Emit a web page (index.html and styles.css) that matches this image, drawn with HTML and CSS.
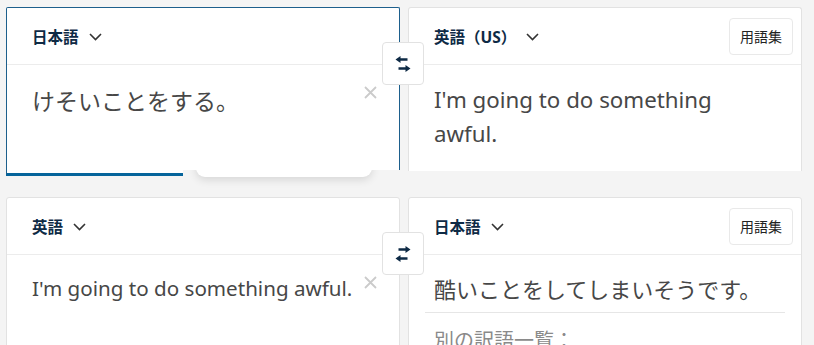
FILE: index.html
```html
<!DOCTYPE html>
<html>
<head>
  <meta charset="utf-8">
  <title>翻訳</title>
  <link rel="stylesheet" href="styles.css">
</head>
<body>
<div class="page">

  <!-- 1組目: 日本語 → 英語 -->
  <section class="pair pair-top">
    <div class="col col-focus">
      <div class="panel panel-focus">
        <div class="panel-head">
          <button class="lang">日本語<svg class="chev" width="13" height="8" viewBox="0 0 13 8"><path d="M1 1l5.5 5.5L12 1" fill="none" stroke="#333" stroke-width="1.6"/></svg></button>
        </div>
        <div class="panel-body">
          <div class="src-text src-jp">けそいことをする。</div>
          <button class="clear"><svg width="13" height="13" viewBox="0 0 13 13"><path d="M1 1l11 11M12 1L1 12" stroke="#cbcbcb" stroke-width="1.8"/></svg></button>
        </div>
      </div>
      <div class="focus-bar"></div>
      <div class="suggest"></div>
    </div>
    <div class="col">
      <div class="panel panel-cut">
        <div class="panel-head">
          <button class="lang">英語（US）<svg class="chev" width="13" height="8" viewBox="0 0 13 8"><path d="M1 1l5.5 5.5L12 1" fill="none" stroke="#333" stroke-width="1.6"/></svg></button>
          <button class="glossary">用語集</button>
        </div>
        <div class="panel-body out-body">
          <div class="out-text out-big">I'm going to do something awful.</div>
        </div>
      </div>
    </div>
    <button class="swap"><svg width="16" height="18" viewBox="0 0 16 18"><path d="M4 4.5H12.5M12 13.5H3.5" stroke="#0e2a45" stroke-width="2.4"/><path d="M0.5 4.5L5.5 1v7zM15.5 13.5L10.5 10v7z" fill="#0e2a45"/></svg></button>
  </section>

  <!-- 2組目: 英語 → 日本語 -->
  <section class="pair pair-bottom">
    <div class="col">
      <div class="panel panel-tall">
        <div class="panel-head">
          <button class="lang">英語<svg class="chev" width="13" height="8" viewBox="0 0 13 8"><path d="M1 1l5.5 5.5L12 1" fill="none" stroke="#333" stroke-width="1.6"/></svg></button>
        </div>
        <div class="panel-body">
          <div class="src-text src-en">I'm going to do something awful.</div>
          <button class="clear"><svg width="13" height="13" viewBox="0 0 13 13"><path d="M1 1l11 11M12 1L1 12" stroke="#cbcbcb" stroke-width="1.8"/></svg></button>
        </div>
      </div>
    </div>
    <div class="col">
      <div class="panel panel-tall">
        <div class="panel-head">
          <button class="lang">日本語<svg class="chev" width="13" height="8" viewBox="0 0 13 8"><path d="M1 1l5.5 5.5L12 1" fill="none" stroke="#333" stroke-width="1.6"/></svg></button>
          <button class="glossary">用語集</button>
        </div>
        <div class="result">
          <div class="result-text">酷いことをしてしまいそうです。</div>
          <div class="alt-title">別の訳語一覧：</div>
        </div>
      </div>
    </div>
    <button class="swap swap-flip"><svg width="16" height="18" viewBox="0 0 16 18"><path d="M4 4.5H12.5M12 13.5H3.5" stroke="#0e2a45" stroke-width="2.4"/><path d="M0.5 4.5L5.5 1v7zM15.5 13.5L10.5 10v7z" fill="#0e2a45"/></svg></button>
  </section>

</div>
</body>
</html>
```

FILE: styles.css
```css
/* 全体 */
html, body { margin: 0; padding: 0; height: 345px; overflow: hidden; }
body { background: #f4f4f4; font-family: "Noto Sans", "Noto Sans CJK JP", sans-serif; color: #474747; }
button { font-family: inherit; background: none; border: none; padding: 0; cursor: pointer; }
.page { padding: 7px 12px 0 6px; }

/* 左右のペア */
.pair { position: relative; display: grid; grid-template-columns: 1fr 1fr; gap: 8px; align-items: start; }
.pair-bottom { margin-top: 21px; }
.col { position: relative; }

/* パネル */
.panel { position: relative; z-index: 1; background: #fff; border: 1px solid #e2e2e2; border-radius: 3px; }
.panel-focus { border-color: #1d5f8c; border-bottom: none; border-radius: 2px 2px 0 0; height: 163px; box-sizing: border-box; }
.panel-cut { border-bottom: none; height: 164px; box-sizing: border-box; border-radius: 3px 3px 0 0; }
.panel-tall { height: 170px; }
.focus-bar { position: relative; z-index: 1; width: 176px; height: 3px; background: #fff; border-left: 1px solid #1d5f8c; border-bottom: 3px solid #05649b; }
.suggest { position: absolute; z-index: 0; left: 190px; top: 120px; width: 176px; height: 50px; background: #fff; border-radius: 0 0 9px 9px; box-shadow: 0 3px 8px rgba(0, 0, 0, 0.12); }

/* ヘッダー */
.panel-head { display: flex; justify-content: space-between; align-items: center; height: 56px; padding: 0 8px 0 25px; border-bottom: 1px solid #ececec; }
.lang { display: flex; align-items: center; gap: 10px; font-size: 15.5px; font-weight: bold; color: #0e2a45; }
.chev { display: block; margin-top: 1px; }
.glossary { height: 37px; padding: 0 10px; border: 1px solid #e9e9e9; border-radius: 4px; font-size: 14px; color: #222; }

/* 本文 */
.panel-body { display: flex; align-items: flex-start; gap: 4px; padding: 18px 22px 0 25px; }
.src-text { flex: 1; min-width: 0; }
.src-jp { font-size: 23px; line-height: 34px; font-family: "Noto Sans CJK JP", sans-serif; }
.src-en { font-size: 20.6px; line-height: 30px; white-space: nowrap; }
.clear { flex: none; margin-top: 3px; width: 13px; height: 13px; }
.clear svg { display: block; }
.out-body { padding-right: 40px; }
.out-big { font-size: 22.3px; line-height: 34px; }

/* 訳文 */
.result { padding: 18px 16px 0 16px; }
.result-text { padding: 0 0 9px 9px; border-bottom: 1px solid #e6e6e6; font-size: 22px; line-height: 30px; font-family: "Noto Sans CJK JP", sans-serif; }
.alt-title { padding: 12px 0 0 9px; font-size: 20px; line-height: 30px; color: #8a8a8a; font-family: "Noto Sans CJK JP", sans-serif; }

/* 入れ替えボタン */
.swap { position: absolute; z-index: 2; top: 35px; left: calc(50% - 22px); width: 42px; height: 43px; display: flex; align-items: center; justify-content: center; background: #fff; border: 1px solid #e2e2e2; border-radius: 4px; }
.swap svg { display: block; }
.swap-flip svg { transform: scaleX(-1); }
```
